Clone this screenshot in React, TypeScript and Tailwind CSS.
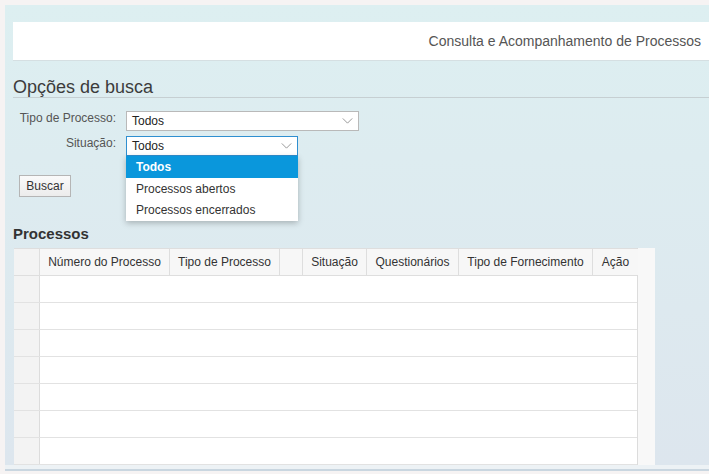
import React from 'react';

const Chevron: React.FC<{ className?: string }> = ({ className }) => (
    <svg className={className} viewBox="0 0 12 7" fill="none" stroke="currentColor" strokeWidth="1"><path d="M0.5 0.5 L6 6 L11.5 0.5" /></svg>
);

const columns = [
    { label: '', w: 'w-[26px]', bg: 'bg-[#f3f3f3]' },
    { label: 'Número do Processo', w: 'w-[130px]', bg: 'bg-[#f7f7f7]' },
    { label: 'Tipo de Processo', w: 'w-[110px]', bg: 'bg-[#f7f7f7]' },
    { label: '', w: 'w-[23px]', bg: 'bg-[#f7f7f7]' },
    { label: 'Situação', w: 'w-[64px]', bg: 'bg-[#f7f7f7]' },
    { label: 'Questionários', w: 'w-[92px]', bg: 'bg-[#f7f7f7]' },
    { label: 'Tipo de Fornecimento', w: 'w-[134px]', bg: 'bg-[#f7f7f7]' },
    { label: 'Ação', w: 'w-[45px]', bg: 'bg-[#f7f7f7]' },
];

const rows = [0, 1, 2, 3, 4, 5, 6];

const App: React.FC = () => {
    return (
        <div className="w-[709px] h-[474px] overflow-hidden bg-[#f6f3f3] pt-[5px] pl-[5px] text-[#333] font-['Liberation_Sans',Arial,sans-serif]">
            <div className="h-[460px] bg-gradient-to-b from-[#ddeff1] to-[#dde6ee] pl-[8px] pt-[17px]">
                <div className="h-[39px] bg-white border-b border-[#d5dfe2] flex items-center justify-end pr-[8px] text-[14px] text-[#555]">
                    Consulta e Acompanhamento de Processos
                </div>

                <div className="mt-[14px] h-[23px] leading-[24px] border-b border-[#c6cfd2] text-[18px] text-[#3c3c3c]">
                    Opções de busca
                </div>

                <div className="relative mt-[13px] text-[12px]">
                    <div className="flex items-start">
                        <div className="w-[103px] text-right text-[#555] leading-[14px]">Tipo de Processo:</div>
                        <div className="ml-[10px] w-[233px] h-[20px] bg-white border border-[#b9b9b9] flex items-center justify-between pl-[5px] pr-[5px] text-[#222]">
                            <span>Todos</span>
                            <Chevron className="w-[11px] h-[6px] text-[#888]" />
                        </div>
                    </div>
                    <div className="flex items-start mt-[5px]">
                        <div className="w-[103px] text-right text-[#555] leading-[14px]">Situação:</div>
                        <div className="relative ml-[10px] w-[172px] h-[20px] bg-white border border-[#2f8fd0] flex items-center justify-between pl-[5px] pr-[5px] text-[#222]">
                            <span>Todos</span>
                            <Chevron className="w-[11px] h-[6px] text-[#888]" />
                            <div className="absolute left-[-1px] top-[19px] w-[172px] bg-white shadow-[0_2px_6px_rgba(0,0,0,0.25)] z-10">
                                <div className="h-[22px] bg-[#0a97dc] text-white font-bold flex items-center pl-[10px]">Todos</div>
                                <div className="h-[21px] flex items-center pl-[10px] text-[#333]">Processos abertos</div>
                                <div className="h-[22px] flex items-center pl-[10px] text-[#333]">Processos encerrados</div>
                            </div>
                        </div>
                    </div>
                    <button className="mt-[19px] ml-[6px] w-[52px] h-[22px] border border-[#b5b5b5] bg-gradient-to-b from-[#fafafa] to-[#ececec] text-[12px] text-[#333]">
                        Buscar
                    </button>
                </div>

                <div className="mt-[28px] text-[15px] font-bold leading-[17px] text-[#333]">Processos</div>

                <div className="mt-[6px] ml-[1px] flex">
                    <div className="w-[624px] bg-white border-r border-[#dcdcdc]">
                        <div className="flex h-[28px] border-y border-[#dedede]">
                            {columns.map((c, i) => (
                                <div key={i} className={`${c.w} ${c.bg} shrink-0 flex items-center justify-center text-[12px] text-[#333] border-r border-[#dedede] last:border-r-0`}>
                                    {c.label}
                                </div>
                            ))}
                        </div>
                        {rows.map((r) => (
                            <div key={r} className="flex h-[27px] border-b border-[#e2e2e2]">
                                <div className="w-[26px] shrink-0 bg-[#f3f3f3] border-r border-[#dcdcdc]" />
                                <div className="flex-1" />
                            </div>
                        ))}
                    </div>
                    <div className="w-[17px] bg-[#f8f8f8]" />
                </div>
            </div>
            <div className="h-[6px] bg-[#edf2f5] border-b-[2px] border-[#c9d6e0]" />
        </div>
    );
};

export default App;
